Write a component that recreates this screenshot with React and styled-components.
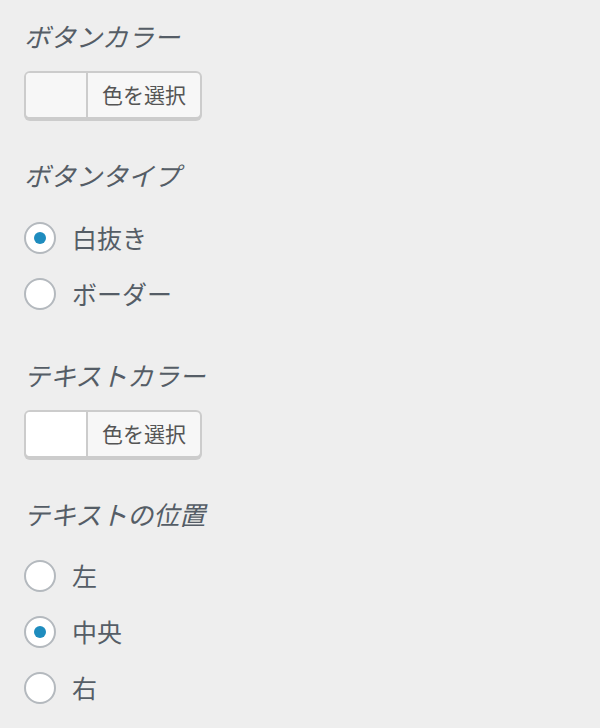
import React, { useState } from "react";
import styled, { createGlobalStyle } from "styled-components";

const GlobalStyle = createGlobalStyle`
  html, body {
    margin: 0;
    padding: 0;
    background: #eeeeee;
  }
  body {
    font-family: "Noto Sans CJK JP", "Noto Sans", sans-serif;
    color: #555d66;
  }
`;

const Panel = styled.div`
  display: flex;
  flex-direction: column;
  padding: 18px 24px 0;
  min-height: 710px;
`;

const Section = styled.div`
  display: flex;
  flex-direction: column;
  margin-bottom: ${(p) => p.$after}px;
`;

const Title = styled.div`
  font-size: 26px;
  font-style: italic;
  line-height: 36px;
  height: 36px;
  color: #555d66;
  margin-bottom: ${(p) => p.$gap}px;
`;

const ColorButton = styled.button`
  display: flex;
  align-items: stretch;
  width: 178px;
  height: 48px;
  padding: 0;
  border: 2px solid #cccccc;
  border-radius: 6px;
  background: #f7f7f7;
  box-shadow: 0 2px 0 #cccccc;
  overflow: hidden;
  cursor: pointer;
`;

const Swatch = styled.span`
  width: 60px;
  background: ${(p) => p.$color};
  border-right: 2px solid #cccccc;
`;

const ButtonText = styled.span`
  flex: 1;
  display: flex;
  align-items: center;
  justify-content: center;
  font-family: "Noto Sans CJK JP", "Noto Sans", sans-serif;
  font-size: 21px;
  color: #555555;
  padding-bottom: 2px;
`;

const RadioList = styled.div`
  display: flex;
  flex-direction: column;
  gap: 24px;
`;

const RadioRow = styled.label`
  display: flex;
  align-items: center;
  gap: 16px;
  height: 32px;
  cursor: pointer;
`;

const Circle = styled.span`
  box-sizing: border-box;
  width: 32px;
  height: 32px;
  border-radius: 50%;
  border: 2px solid #b4b9be;
  background: #ffffff;
  display: flex;
  align-items: center;
  justify-content: center;

  &::after {
    content: "";
    width: 12px;
    height: 12px;
    border-radius: 50%;
    background: ${(p) => (p.$checked ? "#1e8cbe" : "transparent")};
  }
`;

const RadioLabel = styled.span`
  font-size: 25px;
  line-height: 32px;
  color: #555d66;
  padding-bottom: 2px;
`;

const Radio = ({ label, checked, onSelect }) => (
  <RadioRow onClick={onSelect}>
    <Circle $checked={checked} />
    <RadioLabel>{label}</RadioLabel>
  </RadioRow>
);

const App = () => {
  const [type, setType] = useState("白抜き");
  const [pos, setPos] = useState("中央");

  return (
    <>
      <GlobalStyle />
      <Panel>
        <Section $after={38}>
          <Title $gap={17}>ボタンカラー</Title>
          <ColorButton>
            <Swatch $color="#f7f7f7" />
            <ButtonText>色を選択</ButtonText>
          </ColorButton>
        </Section>
        <Section $after={47}>
          <Title $gap={29}>ボタンタイプ</Title>
          <RadioList>
            {["白抜き", "ボーダー"].map((l) => (
              <Radio key={l} label={l} checked={type === l} onSelect={() => setType(l)} />
            ))}
          </RadioList>
        </Section>
        <Section $after={38}>
          <Title $gap={17}>テキストカラー</Title>
          <ColorButton>
            <Swatch $color="#ffffff" />
            <ButtonText>色を選択</ButtonText>
          </ColorButton>
        </Section>
        <Section $after={0}>
          <Title $gap={28}>テキストの位置</Title>
          <RadioList>
            {["左", "中央", "右"].map((l) => (
              <Radio key={l} label={l} checked={pos === l} onSelect={() => setPos(l)} />
            ))}
          </RadioList>
        </Section>
      </Panel>
    </>
  );
};

export default App;
